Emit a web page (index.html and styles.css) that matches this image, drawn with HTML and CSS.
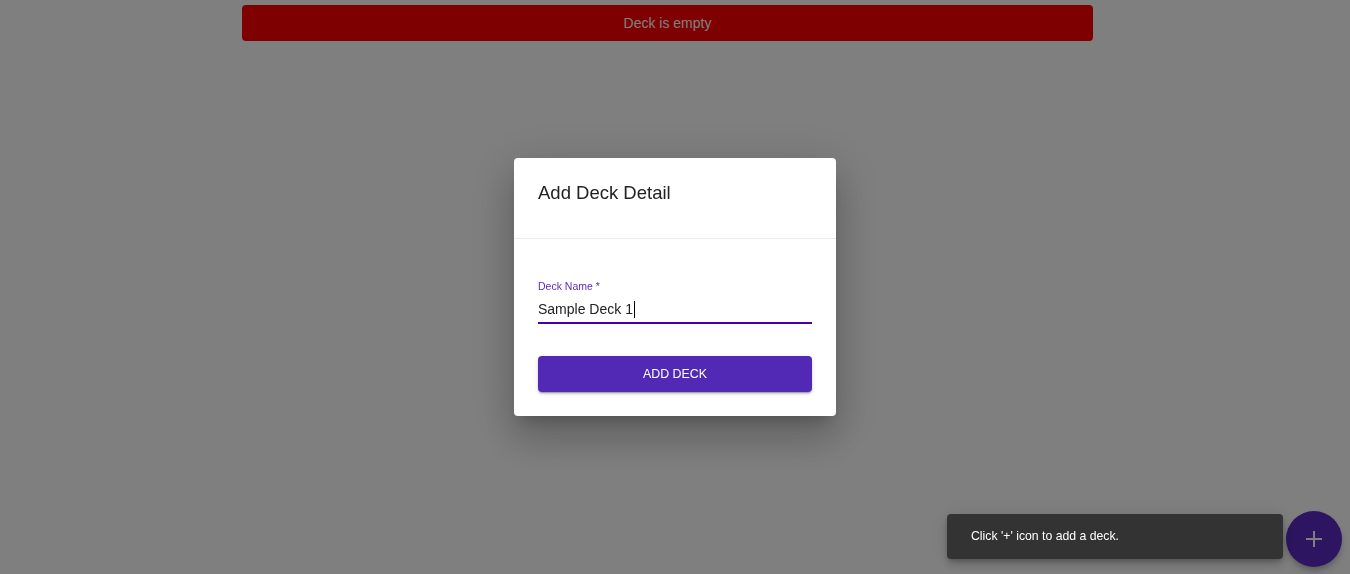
FILE: index.html
```html
<!DOCTYPE html>
<html lang="en">
<head>
<meta charset="utf-8">
<title>Decks</title>
<link rel="stylesheet" href="styles.css">
</head>
<body>
<main class="page">
  <div class="alert">Deck is empty</div>
  <button class="fab" aria-label="Add deck">
    <svg width="20" height="20" viewBox="0 0 20 20"><path d="M10 2v16M2 10h16" stroke="#ffffff" stroke-width="2" fill="none"/></svg>
  </button>
</main>
<div class="backdrop">
  <div class="dialog">
    <div class="dialog-title">Add Deck Detail</div>
    <div class="dialog-content">
      <div class="field">
        <label class="field-label">Deck Name *</label>
        <div class="field-input"><span>Sample Deck 1</span><span class="caret"></span></div>
      </div>
      <button class="primary-btn">ADD DECK</button>
    </div>
  </div>
</div>
<div class="snackbar">Click '+' icon to add a deck.</div>
</body>
</html>
```
FILE: styles.css
```css
html, body {
  margin: 0;
  padding: 0;
  background: #ffffff;
  font-family: "Liberation Sans", Arial, sans-serif;
}
.page {
  padding-top: 5px;
  height: 574px;
  box-sizing: border-box;
}
.alert {
  margin-left: 242px;
  width: 851px;
  height: 36px;
  background: #ff0000;
  color: #ffffff;
  border-radius: 4px;
  font-size: 14px;
  display: flex;
  align-items: center;
  justify-content: center;
}
.fab {
  position: fixed;
  left: 1286px;
  top: 511px;
  width: 56px;
  height: 56px;
  border-radius: 50%;
  border: none;
  background: #5a2bc4;
  display: flex;
  align-items: center;
  justify-content: center;
  padding: 0;
  box-shadow: 0 3px 5px -1px rgba(0,0,0,0.2), 0 6px 10px rgba(0,0,0,0.14);
}
.backdrop {
  position: fixed;
  inset: 0;
  background: rgba(0, 0, 0, 0.5);
  display: flex;
  align-items: center;
  justify-content: center;
}
.dialog {
  width: 322px;
  background: #ffffff;
  border-radius: 4px;
  box-shadow: 0 11px 15px -7px rgba(0,0,0,0.2), 0 24px 38px 3px rgba(0,0,0,0.14), 0 9px 46px 8px rgba(0,0,0,0.12);
}
.dialog-title {
  padding: 24px 24px 34px;
  font-size: 18.5px;
  line-height: 22px;
  color: #222222;
  border-bottom: 1px solid #ebebeb;
}
.dialog-content {
  padding: 40px 24px 24px;
  display: flex;
  flex-direction: column;
}
.field {
  display: flex;
  flex-direction: column;
}
.field-label {
  font-size: 10.5px;
  line-height: 14px;
  color: #5b2cc0;
}
.field-input {
  margin-top: 7px;
  font-size: 14px;
  line-height: 19px;
  color: #222222;
  padding-bottom: 3px;
  border-bottom: 2px solid #4800ac;
  display: flex;
  align-items: center;
}
.caret {
  display: inline-block;
  width: 1px;
  height: 17px;
  background: #000000;
  margin-left: 1px;
}
.primary-btn {
  margin-top: 32px;
  height: 36px;
  border: none;
  border-radius: 4px;
  background: #5229b5;
  color: #ffffff;
  font-family: "Liberation Sans", Arial, sans-serif;
  font-size: 12.4px;
  box-shadow: 0 3px 1px -2px rgba(0,0,0,0.2), 0 2px 2px rgba(0,0,0,0.14), 0 1px 5px rgba(0,0,0,0.12);
}
.snackbar {
  position: fixed;
  left: 947px;
  top: 514px;
  width: 336px;
  height: 45px;
  box-sizing: border-box;
  padding-left: 24px;
  padding-bottom: 1px;
  display: flex;
  align-items: center;
  background: #333333;
  color: #ffffff;
  font-size: 12.25px;
  border-radius: 4px;
  box-shadow: 0 3px 5px -1px rgba(0,0,0,0.2), 0 6px 10px rgba(0,0,0,0.14), 0 1px 18px rgba(0,0,0,0.12);
}
```
